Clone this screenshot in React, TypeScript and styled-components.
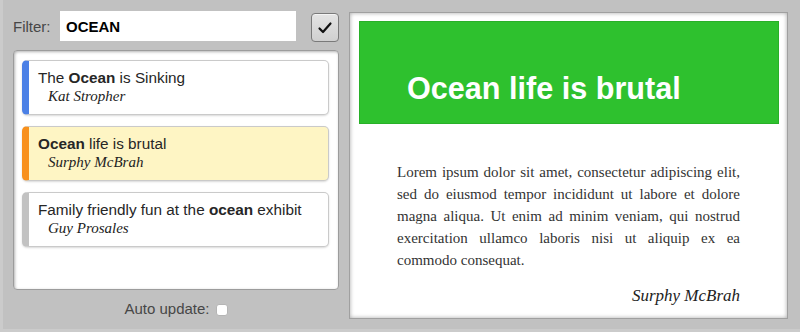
import { useState } from "react";
import styled, { createGlobalStyle } from "styled-components";

const GlobalStyle = createGlobalStyle`
  html, body {
    margin: 0;
    padding: 0;
    background: #c1c1c1;
  }
  * {
    box-sizing: border-box;
  }
`;

interface Article {
  title: string;
  match: string;
  author: string;
  tone: "blue" | "orange" | "gray";
}

const articles: Article[] = [
  { title: "The Ocean is Sinking", match: "Ocean", author: "Kat Stropher", tone: "blue" },
  { title: "Ocean life is brutal", match: "Ocean", author: "Surphy McBrah", tone: "orange" },
  {
    title: "Family friendly fun at the ocean exhibit",
    match: "ocean",
    author: "Guy Prosales",
    tone: "gray",
  },
];

const barColors = {
  blue: "#4b80e6",
  orange: "#f8901c",
  gray: "#c2c2c2",
};

const Page = styled.div`
  width: 800px;
  height: 332px;
  display: flex;
  gap: 10px;
  padding: 11px 12px 0 10px;
  border-left: 3px solid #cbcbcb;
  border-bottom: 3px solid #cbcbcb;
  font-family: "Liberation Sans", Arial, sans-serif;
`;

const Sidebar = styled.div`
  width: 326px;
  display: flex;
  flex-direction: column;
`;

const FilterRow = styled.div`
  display: flex;
  align-items: center;
  height: 31px;
`;

const FilterLabel = styled.label`
  font-size: 15px;
  color: #474747;
  width: 47px;
`;

const FilterInput = styled.input`
  width: 236px;
  height: 30px;
  border: none;
  outline: none;
  padding: 0 6px;
  font-family: "Liberation Sans", Arial, sans-serif;
  font-size: 15px;
  font-weight: bold;
  color: #000;
  background: #fff;
  align-self: flex-start;
`;

const CheckButton = styled.button`
  margin-left: auto;
  width: 28px;
  height: 29px;
  padding: 0;
  display: flex;
  align-items: center;
  justify-content: center;
  border: 1px solid #7a7a7a;
  border-radius: 4px;
  background: linear-gradient(#e4e4e4, #d0d0d0);
  box-shadow: inset 0 1px 0 rgba(255, 255, 255, 0.6);
  align-self: flex-end;
`;

const ListPanel = styled.div`
  margin-top: 8px;
  height: 240px;
  background: #fff;
  border: 1px solid #9c9c9c;
  border-radius: 4px;
  box-shadow: inset 1px 1px 3px rgba(0, 0, 0, 0.3);
  padding: 9px 9px 9px 8px;
  display: flex;
  flex-direction: column;
  gap: 11px;
`;

const Item = styled.div<{ $tone: Article["tone"]; $active?: boolean }>`
  height: 55px;
  border: 1px solid #cacaca;
  border-left: 7px solid ${(p) => barColors[p.$tone]};
  border-radius: 5px;
  background: ${(p) => (p.$active ? "#fef5c4" : "#fff")};
  box-shadow: 0 1px 2px rgba(0, 0, 0, 0.15);
  padding: 8px 0 0 9px;
`;

const ItemTitle = styled.div`
  font-size: 15.3px;
  line-height: 18px;
  color: #262626;

  b {
    font-weight: bold;
  }
`;

const ItemAuthor = styled.div`
  font-family: "Liberation Serif", "Times New Roman", serif;
  font-style: italic;
  font-size: 15px;
  line-height: 18px;
  color: #222;
  padding-left: 10px;
`;

const AutoRow = styled.div`
  margin-top: 10px;
  display: flex;
  align-items: center;
  justify-content: center;
  gap: 6px;
  font-size: 15px;
  line-height: 18px;
  color: #474747;
`;

const Checkbox = styled.span`
  width: 12px;
  height: 12px;
  border-radius: 3px;
  background: #fff;
  border: 1px solid #b5b5b5;
  margin-top: 2px;
`;

const Reader = styled.div`
  margin-top: 1px;
  width: 439px;
  height: 307px;
  background: #fff;
  border: 1px solid #a0a0a0;
  box-shadow: inset 0 0 4px rgba(0, 0, 0, 0.35);
  padding: 8px 8px 0 9px;
`;

const Banner = styled.div`
  height: 103px;
  background: #2ec12e;
  border: 1px solid #28b028;
  padding: 48px 0 0 47px;
`;

const BannerTitle = styled.h1`
  margin: 0;
  font-size: 30.6px;
  line-height: 36px;
  font-weight: bold;
  color: #fff;
`;

const Body = styled.p`
  margin: 37px 39px 0 38px;
  font-family: "Liberation Serif", "Times New Roman", serif;
  font-size: 15px;
  line-height: 22px;
  text-align: justify;
  color: #333;
`;

const Byline = styled.div`
  margin: 15px 39px 0 0;
  text-align: right;
  font-family: "Liberation Serif", "Times New Roman", serif;
  font-style: italic;
  font-size: 17px;
  line-height: 20px;
  color: #222;
`;

function Highlight({ text, match }: { text: string; match: string }) {
  const i = text.indexOf(match);
  if (i < 0) return <>{text}</>;
  return (
    <>
      {text.slice(0, i)}
      <b>{match}</b>
      {text.slice(i + match.length)}
    </>
  );
}

export default function App() {
  const [filter, setFilter] = useState("OCEAN");
  const selected = articles[1];

  return (
    <>
      <GlobalStyle />
      <Page>
        <Sidebar>
          <FilterRow>
            <FilterLabel>Filter:</FilterLabel>
            <FilterInput value={filter} onChange={(e) => setFilter(e.target.value)} />
            <CheckButton>
              <svg width="16" height="16" viewBox="0 0 16 16">
                <path d="M2.5 8.5 L6 12 L13.5 3.5" fill="none" stroke="#111" strokeWidth="2.2" strokeLinecap="round" strokeLinejoin="round" />
              </svg>
            </CheckButton>
          </FilterRow>
          <ListPanel>
            {articles.map((a) => (
              <Item key={a.title} $tone={a.tone} $active={a === selected}>
                <ItemTitle>
                  <Highlight text={a.title} match={a.match} />
                </ItemTitle>
                <ItemAuthor>{a.author}</ItemAuthor>
              </Item>
            ))}
          </ListPanel>
          <AutoRow>
            Auto update:
            <Checkbox />
          </AutoRow>
        </Sidebar>
        <Reader>
          <Banner>
            <BannerTitle>{selected.title}</BannerTitle>
          </Banner>
          <Body>
            Lorem ipsum dolor sit amet, consectetur adipiscing elit, sed do eiusmod tempor
            incididunt ut labore et dolore magna aliqua. Ut enim ad minim veniam, qui nostrud
            exercitation ullamco laboris nisi ut aliquip ex ea commodo consequat.
          </Body>
          <Byline>{selected.author}</Byline>
        </Reader>
      </Page>
    </>
  );
}
